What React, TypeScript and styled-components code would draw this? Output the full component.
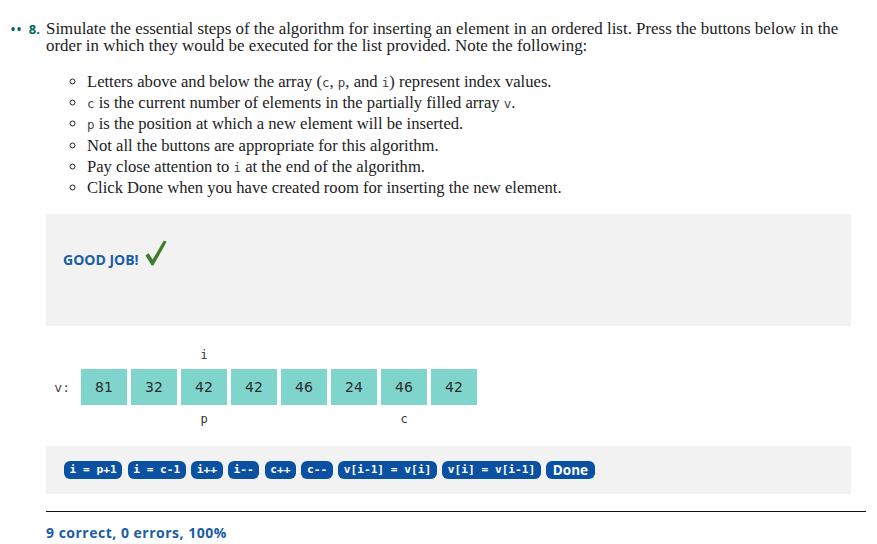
import React from "react";
import styled, { createGlobalStyle } from "styled-components";

const GlobalStyle = createGlobalStyle`
  html, body { margin: 0; padding: 0; background: #fff; }
  body { font-family: "Liberation Serif", "DejaVu Serif", serif; color: #222; }
`;

const Page = styled.div`
  width: 877px;
  padding-top: 20px;
`;

const HeaderRow = styled.div`
  display: flex;
  align-items: baseline;
`;

const Gutter = styled.div`
  width: 46px;
  flex: none;
  display: flex;
  align-items: baseline;
  justify-content: flex-end;
  padding-right: 6px;
  box-sizing: border-box;
  color: #00695f;
  font-family: "Open Sans", "DejaVu Sans", sans-serif;
  font-weight: 700;
  font-size: 13px;
`;

const Dots = styled.span`
  letter-spacing: 1.5px;
  margin-right: 6px;
  font-size: 12px;
`;

const QuestionText = styled.p`
  margin: 0;
  width: 805px;
  font-size: 16.9px;
  line-height: 17px;
  color: #222;
`;

const Main = styled.div`
  margin-left: 46px;
  width: 820px;
`;

const Notes = styled.ul`
  list-style: circle;
  margin: 17px 0 0 0;
  padding-left: 41px;
  font-size: 16.6px;
  line-height: 21.2px;

  li {
    height: 21.2px;
  }
`;

const Code = styled.code`
  font-family: "DejaVu Sans Mono", "Liberation Mono", monospace;
  font-size: 12.5px;
  line-height: 0;
  color: #444;
`;

const FeedbackBox = styled.div`
  margin-top: 16px;
  width: 805px;
  height: 112px;
  box-sizing: border-box;
  background: #f2f2f2;
  padding: 26px 17px 0;
  display: flex;
  align-items: flex-start;
`;

const GoodJob = styled.div`
  display: flex;
  align-items: flex-end;
  gap: 6px;
  color: #1a5da8;
  font-family: "Open Sans", "DejaVu Sans", sans-serif;
  font-weight: 700;
  font-size: 14px;
  line-height: 13px;
  height: 26px;
`;

const Check = styled.svg`
  width: 22px;
  height: 26px;
  display: block;
`;

const ArrayGrid = styled.div`
  margin-top: 19px;
  display: grid;
  grid-template-columns: 31px repeat(8, 46px);
  grid-template-rows: 20px 36px 20px;
  column-gap: 4px;
  row-gap: 4px;
  font-family: "DejaVu Sans Mono", "Liberation Mono", monospace;
  font-size: 12px;
  color: #333;
`;

const IndexLabel = styled.div`
  display: flex;
  align-items: center;
  justify-content: center;
`;

const ArrayName = styled.div`
  display: flex;
  align-items: center;
  justify-content: flex-end;
  padding-right: 7px;
  font-size: 13px;
  color: #444;
`;

const Cell = styled.div`
  background: #7fd4cc;
  display: flex;
  align-items: center;
  justify-content: center;
  font-family: "DejaVu Sans", "Liberation Sans", sans-serif;
  font-size: 14px;
  color: #2d2d2d;
`;

const ButtonBar = styled.div`
  margin-top: 17px;
  width: 805px;
  height: 48px;
  box-sizing: border-box;
  background: #f2f2f2;
  padding: 15px 18px;
  display: flex;
  gap: 5.5px;
`;

const StepButton = styled.button<{ $sans?: boolean }>`
  height: 18px;
  padding: 0 ${(p) => (p.$sans ? "6.5px" : "5.5px")};
  border: none;
  border-radius: 6px;
  background: #0a51a1;
  color: #fff;
  font-family: ${(p) =>
    p.$sans
      ? `"Open Sans", "DejaVu Sans", sans-serif`
      : `"DejaVu Sans Mono", "Liberation Mono", monospace`};
  font-size: ${(p) => (p.$sans ? "13.5px" : "11.2px")};
  font-weight: 700;
  line-height: 18px;
  white-space: pre;
  cursor: pointer;
`;

const Rule = styled.hr`
  margin: 17px 0 0 0;
  width: 820px;
  border: none;
  border-top: 1px solid #111;
`;

const Score = styled.div`
  margin-top: 12px;
  color: #1a5da8;
  font-family: "Open Sans", "DejaVu Sans", sans-serif;
  font-weight: 700;
  font-size: 14px;
  letter-spacing: 0.5px;
  line-height: 18px;
`;

const values = [81, 32, 42, 42, 46, 24, 46, 42];
const topLabels: Record<number, string> = { 2: "i" };
const bottomLabels: Record<number, string> = { 2: "p", 6: "c" };
const buttons = [
  "i = p+1",
  "i = c-1",
  "i++",
  "i--",
  "c++",
  "c--",
  "v[i-1] = v[i]",
  "v[i] = v[i-1]",
];

export default function App() {
  return (
    <Page>
      <GlobalStyle />
      <HeaderRow>
        <Gutter>
          <Dots>••</Dots>
          <span>8.</span>
        </Gutter>
        <QuestionText>
          Simulate the essential steps of the algorithm for inserting an element in an
          ordered list. Press the buttons below in the order in which they would be
          executed for the list provided. Note the following:
        </QuestionText>
      </HeaderRow>
      <Main>
        <Notes>
          <li>
            Letters above and below the array (<Code>c</Code>, <Code>p</Code>, and{" "}
            <Code>i</Code>) represent index values.
          </li>
          <li>
            <Code>c</Code> is the current number of elements in the partially filled array{" "}
            <Code>v</Code>.
          </li>
          <li>
            <Code>p</Code> is the position at which a new element will be inserted.
          </li>
          <li>Not all the buttons are appropriate for this algorithm.</li>
          <li>
            Pay close attention to <Code>i</Code> at the end of the algorithm.
          </li>
          <li>Click Done when you have created room for inserting the new element.</li>
        </Notes>

        <FeedbackBox>
          <GoodJob>
            <span>GOOD JOB!</span>
            <Check viewBox="0 0 22 26" aria-hidden="true">
              <path
                d="M0.5 15.5 L3.6 13.2 L7.6 19.6 L18.8 0.6 L21.6 1.8 L8.4 25.6 L6.6 25.6 Z"
                fill="#3e7d2b"
              />
            </Check>
          </GoodJob>
        </FeedbackBox>

        <ArrayGrid>
          <div />
          {values.map((_, i) => (
            <IndexLabel key={`t${i}`}>{topLabels[i] ?? ""}</IndexLabel>
          ))}
          <ArrayName>v:</ArrayName>
          {values.map((v, i) => (
            <Cell key={`c${i}`}>{v}</Cell>
          ))}
          <div />
          {values.map((_, i) => (
            <IndexLabel key={`b${i}`}>{bottomLabels[i] ?? ""}</IndexLabel>
          ))}
        </ArrayGrid>

        <ButtonBar>
          {buttons.map((b) => (
            <StepButton key={b}>{b}</StepButton>
          ))}
          <StepButton $sans>Done</StepButton>
        </ButtonBar>

        <Rule />
        <Score>9 correct, 0 errors, 100%</Score>
      </Main>
    </Page>
  );
}
